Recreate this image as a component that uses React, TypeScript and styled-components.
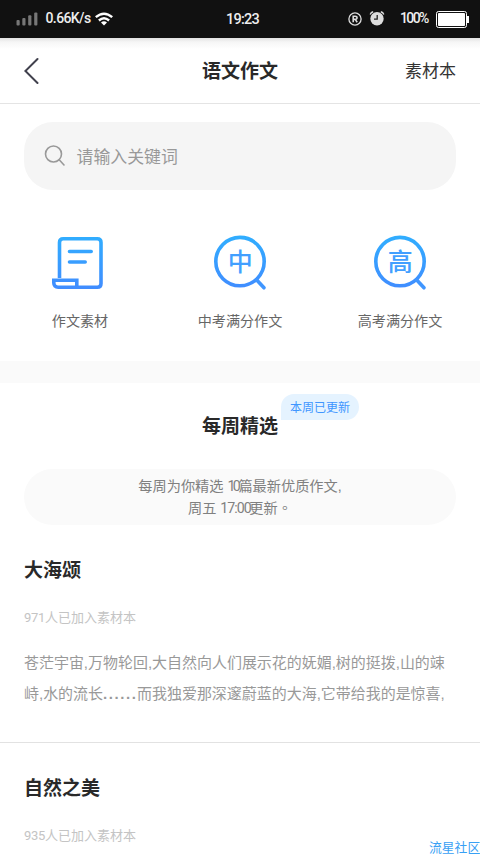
import React from "react";
import styled, { createGlobalStyle } from "styled-components";

const Global = createGlobalStyle`
  * { box-sizing: border-box; }
  body {
    margin: 0;
    background: #fff;
    font-family: "Liberation Sans", "Noto Sans CJK SC", sans-serif;
    overflow: hidden;
  }
`;

const Screen = styled.div`
  position: relative;
  width: 480px;
  height: 854px;
  overflow: hidden;
  background: #fff;
`;

const StatusBar = styled.div`
  display: grid;
  grid-template-columns: 1fr auto 1fr;
  align-items: center;
  height: 38px;
  padding: 0 11px 0 16px;
  background: #111;
  color: #eee;
`;

const StatusGroup = styled.div<{ $end?: boolean }>`
  display: flex;
  align-items: center;
  height: 38px;
  justify-content: ${(p) => (p.$end ? "flex-end" : "flex-start")};
`;

const StatusText = styled.span<{ $width: number; $size: number; $spacing?: number; $shift?: number }>`
  width: ${(p) => p.$width}px;
  font-family: Roboto, sans-serif;
  font-size: ${(p) => p.$size}px;
  line-height: 37px;
  height: 38px;
  font-weight: 500;
  letter-spacing: ${(p) => p.$spacing ?? 0}px;
  margin-left: ${(p) => p.$shift ?? 0}px;
  white-space: nowrap;
`;

const Clock = styled(StatusText)`
  line-height: 39px;
`;

const Icon = styled.svg<{ $left?: number }>`
  display: block;
  flex: none;
  margin-left: ${(p) => p.$left ?? 0}px;
`;

const NavBar = styled.header`
  display: grid;
  grid-template-columns: 1fr auto 1fr;
  align-items: center;
  height: 66px;
  padding: 0 24px;
  border-bottom: 1px solid #e4e4e4;
  background: linear-gradient(#e2e2e2 0, #f6f6f6 4px, #fff 11px);
`;

const NavTitle = styled.h1`
  margin: 0;
  padding-top: 2px;
  font-size: 19px;
  line-height: 28px;
  font-weight: 700;
  color: #292929;
`;

const NavAction = styled.span`
  justify-self: end;
  padding-top: 2px;
  font-size: 17px;
  line-height: 26px;
  color: #333;
`;

const SearchBox = styled.div`
  display: flex;
  align-items: center;
  height: 68px;
  margin: 18px 24px 0;
  padding-left: 20px;
  gap: 10.5px;
  border-radius: 29px;
  background: #f5f5f5;
  color: #999;
  font-size: 16.9px;
`;

const SearchHint = styled.span`
  padding-bottom: 2px;
`;

const Categories = styled.nav`
  display: grid;
  grid-template-columns: repeat(3, 160px);
  height: 171px;
  padding-top: 42px;
`;

const Category = styled.div`
  display: flex;
  flex-direction: column;
  align-items: center;
  gap: 14px;
  font-size: 14.1px;
  line-height: 22px;
  color: #666;
`;

const Band = styled.div`
  height: 22px;
  background: #fafafa;
`;

const SectionHead = styled.div`
  display: flex;
  justify-content: center;
  height: 86px;
  padding-top: 30px;
`;

const SectionTitle = styled.h2`
  position: relative;
  margin: 0;
  font-size: 19px;
  line-height: 28px;
  font-weight: 700;
  color: #292929;
`;

const UpdateTag = styled.span`
  position: absolute;
  left: 79px;
  top: -19px;
  width: 78px;
  height: 26px;
  padding-top: 1px;
  border-radius: 13px 13px 13px 0;
  background: #e5f3ff;
  color: #4096ff;
  font-size: 12px;
  font-weight: 400;
  line-height: 26px;
  text-align: center;
`;

const Notice = styled.div`
  height: 56px;
  margin: 0 24px;
  padding-top: 7px;
  border-radius: 28px;
  background: #fafafa;
  color: #808080;
  font-size: 14.2px;
  line-height: 21px;
  text-align: center;
  white-space: nowrap;
`;

const Digits = styled.span<{ $width: number }>`
  display: inline-block;
  width: ${(p) => p.$width}px;
  font-family: Roboto, sans-serif;
  font-weight: 400;
  letter-spacing: ${(p) => (p.$width < 20 ? -2.6 : -1)}px;
  text-align: left;
`;

const FullStop = styled.span`
  font-family: "Noto Sans CJK TC", sans-serif;
`;

const Article = styled.article<{ $divided?: boolean }>`
  height: 218px;
  padding: 32px 24px 0;
  border-bottom: ${(p) => (p.$divided ? "1px solid #e2e2e2" : "none")};
`;

const ArticleTitle = styled.h3`
  margin: 0;
  font-size: 19px;
  line-height: 28px;
  font-weight: 700;
  color: #292929;
`;

const ArticleMeta = styled.div`
  margin-top: 23px;
  font-size: 13px;
  line-height: 20px;
  color: #c4c4c4;
`;

const MetaCount = styled.span`
  display: inline-block;
  width: 21px;
  font-family: Roboto, sans-serif;
  font-weight: 400;
  letter-spacing: -0.3px;
`;

const Excerpt = styled.p`
  margin: 19px 0 0;
  font-size: 14.97px;
  line-height: 31px;
  color: #999;
  white-space: nowrap;
`;

const Ellipsis = styled.span`
  display: inline-block;
  width: 34px;
  font-weight: 700;
  letter-spacing: 1.6px;
`;

const Watermark = styled.div`
  position: absolute;
  left: 429px;
  top: 838px;
  font-size: 12.8px;
  line-height: 19px;
  color: #38a0f4;
  white-space: nowrap;
`;

const BlueGradient = ({ id }: { id: string }) => (
  <defs>
    <linearGradient id={id} x1="0" y1="0" x2="0" y2="56" gradientUnits="userSpaceOnUse">
      <stop offset="0" stopColor="#2fb0ff" />
      <stop offset="1" stopColor="#408dff" />
    </linearGradient>
  </defs>
);

const ScrollIcon = () => (
  <Icon width="56" height="64" viewBox="0 0 56 64" fill="none">
    <BlueGradient id="scroll" />
    <g stroke="url(#scroll)" strokeWidth="3.6">
      <path d="M7.5 46V10.5Q7.5 6.8 11.2 6.8H45.3Q49 6.8 49 10.5V51.5Q49 55.2 45.3 55.2H6.2Q1.8 55.2 1.8 50.8V48.2H24.8V55" />
      <path d="M17.5 19.5H39.2M17.5 30H33.2" strokeLinecap="round" />
    </g>
  </Icon>
);

const GlyphText = styled.text`
  font-family: "Noto Sans CJK SC", sans-serif;
  font-size: 25px;
  font-weight: 500;
`;

const LensIcon = ({ id, glyph }: { id: string; glyph: string }) => (
  <Icon width="56" height="64" viewBox="0 0 56 64" fill="none">
    <BlueGradient id={id} />
    <circle cx="28" cy="29.6" r="24.2" stroke={`url(#${id})`} strokeWidth="3.6" />
    <path d="M44.7 48L52 55.8" stroke="#4096ff" strokeWidth="3.6" strokeLinecap="round" />
    <GlyphText x="28.2" y="39.3" textAnchor="middle" fill="#429fff">
      {glyph}
    </GlyphText>
  </Icon>
);

const SignalIcon = () => (
  <Icon width="22" height="14" viewBox="0 0 22 14" fill="#777">
    <rect x="0.5" y="8" width="3.2" height="5.5" rx="1" />
    <rect x="6.3" y="6" width="3.2" height="7.5" rx="1" />
    <rect x="12.2" y="3.2" width="3.2" height="10.3" rx="1" />
    <rect x="18.2" y="0.5" width="3.2" height="13" rx="1" />
  </Icon>
);

const WifiIcon = () => (
  <Icon width="18" height="14" viewBox="0 0 18 14" fill="none" stroke="#fff" strokeWidth="2.4">
    <path d="M0.8 5.2Q9-1.9 17.2 5.2M3.9 8.5Q9 4 14.1 8.5" />
    <path d="M6 10.4Q9 8 12 10.4L9 13.6Z" fill="#fff" stroke="none" />
  </Icon>
);

const RegisteredIcon = () => (
  <Icon width="14" height="14" viewBox="0 0 14 14" fill="none" stroke="#ddd">
    <circle cx="7" cy="7" r="6.1" strokeWidth="1.3" />
    <path d="M5.2 10.2V4.2H7.2Q9 4.2 9 5.8T7.2 7.4H5.2M7.2 7.4L9.2 10.2" strokeWidth="1.6" />
  </Icon>
);

const AlarmIcon = () => (
  <Icon width="16" height="16" viewBox="0 0 16 16" $left={7}>
    <circle cx="8" cy="7.8" r="6.7" fill="#ddd" />
    <path d="M1.2 3.4Q2 1.4 4.2 0.8M14.8 3.4Q14 1.4 11.8 0.8" stroke="#ddd" strokeWidth="1.4" fill="none" />
    <path d="M8.2 4V8.1H5" stroke="#222" strokeWidth="1.3" fill="none" />
  </Icon>
);

const BatteryIcon = () => (
  <Icon width="33" height="17" viewBox="0 0 33 17">
    <rect x="0.5" y="0.5" width="30" height="16" rx="2" fill="none" stroke="#fff" />
    <rect x="2" y="2" width="27" height="13" rx="0.8" fill="#fff" />
    <rect x="31" y="5" width="2" height="7" fill="#fff" />
  </Icon>
);

const BackIcon = () => (
  <Icon width="16" height="28" viewBox="0 0 16 28" fill="none">
    <path d="M13.5 2L1.4 14L13.5 26" stroke="#41414d" strokeWidth="2" strokeLinecap="round" />
  </Icon>
);

const SearchIcon = () => (
  <Icon width="22" height="22" viewBox="0 0 22 22" fill="none" stroke="#999" strokeWidth="1.6" strokeLinecap="round">
    <circle cx="9.5" cy="9" r="8" />
    <path d="M15.2 14.8L20 20" />
  </Icon>
);

export default function App() {
  return (
    <Screen>
      <Global />
      <StatusBar>
        <StatusGroup>
          <SignalIcon />
          <StatusText $width={49} $size={14} $spacing={-0.6} $shift={7.5}>0.66K/s</StatusText>
          <WifiIcon />
        </StatusGroup>
        <Clock $width={33} $size={14.5} $spacing={-0.75}>19:23</Clock>
        <StatusGroup $end>
          <RegisteredIcon />
          <AlarmIcon />
          <StatusText $width={36} $size={14} $spacing={-1.6} $shift={15}>100%</StatusText>
          <BatteryIcon />
        </StatusGroup>
      </StatusBar>
      <NavBar>
        <BackIcon />
        <NavTitle>语文作文</NavTitle>
        <NavAction>素材本</NavAction>
      </NavBar>
      <SearchBox>
        <SearchIcon />
        <SearchHint>请输入关键词</SearchHint>
      </SearchBox>
      <Categories>
        <Category>
          <ScrollIcon />
          作文素材
        </Category>
        <Category>
          <LensIcon id="middle" glyph="中" />
          中考满分作文
        </Category>
        <Category>
          <LensIcon id="high" glyph="高" />
          高考满分作文
        </Category>
      </Categories>
      <Band />
      <SectionHead>
        <SectionTitle>
          每周精选
          <UpdateTag>本周已更新</UpdateTag>
        </SectionTitle>
      </SectionHead>
      <Notice>
        <div>每周为你精选 <Digits $width={11}>10</Digits>篇最新优质作文,</div>
        <div>周五 <Digits $width={29}>17:00</Digits>更新<FullStop lang="zh-TW">。</FullStop></div>
      </Notice>
      <Article $divided>
        <ArticleTitle>大海颂</ArticleTitle>
        <ArticleMeta><MetaCount>971</MetaCount>人已加入素材本</ArticleMeta>
        <Excerpt>
          苍茫宇宙,万物轮回,大自然向人们展示花的妩媚,树的挺拨,山的竦
          <br />
          峙,水的流长<Ellipsis>......</Ellipsis>而我独爱那深邃蔚蓝的大海,它带给我的是惊喜,
        </Excerpt>
      </Article>
      <Article>
        <ArticleTitle>自然之美</ArticleTitle>
        <ArticleMeta><MetaCount>935</MetaCount>人已加入素材本</ArticleMeta>
      </Article>
      <Watermark>流星社区</Watermark>
    </Screen>
  );
}
